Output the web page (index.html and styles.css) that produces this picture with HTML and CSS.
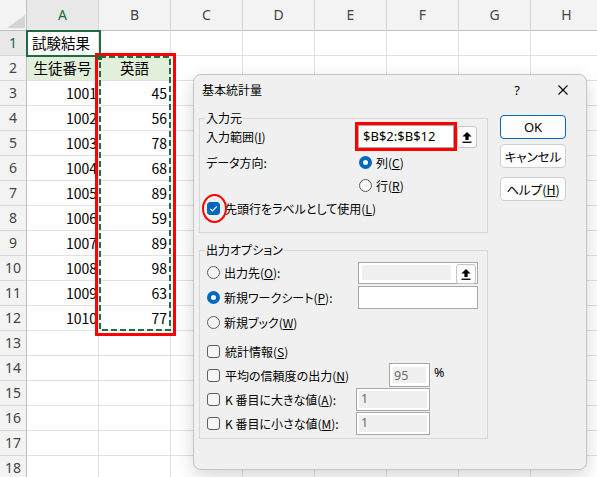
FILE: index.html
```html
<!DOCTYPE html>
<html lang="ja">
<head>
<meta charset="utf-8">
<link rel="stylesheet" href="styles.css">
</head>
<body>
<div class="sheet">
  <div class="h corner"><span class="tri"></span></div>
  <div class="h hs">A</div><div class="h">B</div><div class="h">C</div><div class="h">D</div><div class="h">E</div><div class="h">F</div><div class="h">G</div><div class="h">H</div>

  <div class="rh rhs">1</div><div class="c">試験結果</div><div class="c"></div><div class="c"></div><div class="c"></div><div class="c"></div><div class="c"></div><div class="c"></div><div class="c"></div>
  <div class="rh">2</div><div class="c g">生徒番号</div><div class="c g">英語</div><div class="c"></div><div class="c"></div><div class="c"></div><div class="c"></div><div class="c"></div><div class="c"></div>
  <div class="rh">3</div><div class="c n">1001</div><div class="c n b">45</div><div class="c"></div><div class="c"></div><div class="c"></div><div class="c"></div><div class="c"></div><div class="c"></div>
  <div class="rh">4</div><div class="c n">1002</div><div class="c n b">56</div><div class="c"></div><div class="c"></div><div class="c"></div><div class="c"></div><div class="c"></div><div class="c"></div>
  <div class="rh">5</div><div class="c n">1003</div><div class="c n b">78</div><div class="c"></div><div class="c"></div><div class="c"></div><div class="c"></div><div class="c"></div><div class="c"></div>
  <div class="rh">6</div><div class="c n">1004</div><div class="c n b">68</div><div class="c"></div><div class="c"></div><div class="c"></div><div class="c"></div><div class="c"></div><div class="c"></div>
  <div class="rh">7</div><div class="c n">1005</div><div class="c n b">89</div><div class="c"></div><div class="c"></div><div class="c"></div><div class="c"></div><div class="c"></div><div class="c"></div>
  <div class="rh">8</div><div class="c n">1006</div><div class="c n b">59</div><div class="c"></div><div class="c"></div><div class="c"></div><div class="c"></div><div class="c"></div><div class="c"></div>
  <div class="rh">9</div><div class="c n">1007</div><div class="c n b">89</div><div class="c"></div><div class="c"></div><div class="c"></div><div class="c"></div><div class="c"></div><div class="c"></div>
  <div class="rh">10</div><div class="c n">1008</div><div class="c n b">98</div><div class="c"></div><div class="c"></div><div class="c"></div><div class="c"></div><div class="c"></div><div class="c"></div>
  <div class="rh">11</div><div class="c n">1009</div><div class="c n b">63</div><div class="c"></div><div class="c"></div><div class="c"></div><div class="c"></div><div class="c"></div><div class="c"></div>
  <div class="rh">12</div><div class="c n">1010</div><div class="c n b">77</div><div class="c"></div><div class="c"></div><div class="c"></div><div class="c"></div><div class="c"></div><div class="c"></div>
  <div class="rh">13</div><div class="c"></div><div class="c"></div><div class="c"></div><div class="c"></div><div class="c"></div><div class="c"></div><div class="c"></div><div class="c"></div>
  <div class="rh">14</div><div class="c"></div><div class="c"></div><div class="c"></div><div class="c"></div><div class="c"></div><div class="c"></div><div class="c"></div><div class="c"></div>
  <div class="rh">15</div><div class="c"></div><div class="c"></div><div class="c"></div><div class="c"></div><div class="c"></div><div class="c"></div><div class="c"></div><div class="c"></div>
  <div class="rh">16</div><div class="c"></div><div class="c"></div><div class="c"></div><div class="c"></div><div class="c"></div><div class="c"></div><div class="c"></div><div class="c"></div>
  <div class="rh">17</div><div class="c"></div><div class="c"></div><div class="c"></div><div class="c"></div><div class="c"></div><div class="c"></div><div class="c"></div><div class="c"></div>
  <div class="rh">18</div><div class="c"></div><div class="c"></div><div class="c"></div><div class="c"></div><div class="c"></div><div class="c"></div><div class="c"></div><div class="c"></div>

  <div class="sel-a1"></div>
  <svg class="marquee" width="72" height="275" viewBox="0 0 72 275"><rect x="1" y="1" width="70" height="273" fill="none" stroke="#1f6e3e" stroke-width="2" stroke-dasharray="6 3"/></svg>
  <div class="redbox"></div>
  <div class="handle"></div>
</div>

<div class="dialog">
  <div class="titlebar">
    <span class="title">基本統計量</span>
    <span class="tb-btn q">?</span>
    <span class="tb-btn x"><svg width="10" height="10" viewBox="0 0 10 10"><path d="M0.5 0.5L9.5 9.5M9.5 0.5L0.5 9.5" stroke="#000" stroke-width="1.1"/></svg></span>
  </div>
  <div class="dbody">
    <div class="groups">
      <div class="group g1">
        <div class="gtitle">入力元</div>
        <div class="row ra">
          <span class="lbl w158">入力範囲(<u>I</u>)</span>
          <span class="field range">$B$2:$B$12</span>
          <span class="upbtn"><svg width="10" height="11" viewBox="0 0 10 11"><path d="M5 0L9.6 4.6H6.6V8H3.4V4.6H0.4Z" fill="#000"/><rect x="0.5" y="9.6" width="9" height="1.3" fill="#000"/></svg></span>
        </div>
        <div class="row rb">
          <span class="lbl w158">データ方向:</span>
          <span class="radio on"></span><span class="rtext">列(<u>C</u>)</span>
        </div>
        <div class="row rb">
          <span class="lbl w158"></span>
          <span class="radio"></span><span class="rtext">行(<u>R</u>)</span>
        </div>
        <div class="row rb">
          <span class="check on circled"><svg width="13" height="13" viewBox="0 0 13 13"><path d="M3.3 6.8L5.5 9L9.8 4.4" fill="none" stroke="#fff" stroke-width="1.2"/></svg></span><span class="ctext">先頭行をラベルとして使用(<u>L</u>)</span>
        </div>
      </div>

      <div class="group g2">
        <div class="gtitle">出力オプション</div>
        <div class="row re">
          <span class="lbl w158"><span class="radio"></span><span class="rtext">出力先(<u>O</u>):</span></span>
          <span class="field dis wide"><span class="fill"></span><span class="upbtn in"><svg width="10" height="11" viewBox="0 0 10 11"><path d="M5 0L9.6 4.6H6.6V8H3.4V4.6H0.4Z" fill="#000"/><rect x="0.5" y="9.6" width="9" height="1.3" fill="#000"/></svg></span></span>
        </div>
        <div class="row re">
          <span class="lbl w158"><span class="radio on"></span><span class="rtext">新規ワークシート(<u>P</u>):</span></span>
          <span class="field wide2"></span>
        </div>
        <div class="row re">
          <span class="lbl"><span class="radio"></span><span class="rtext">新規ブック(<u>W</u>)</span></span>
        </div>
        <div class="row rh2">
          <span class="check"></span><span class="ctext">統計情報(<u>S</u>)</span>
        </div>
        <div class="row ri">
          <span class="lbl w189"><span class="check"></span><span class="ctext">平均の信頼度の出力(<u>N</u>)</span></span>
          <span class="field dis pct"><span class="fill">95</span></span>
          <span class="pctsign">%</span>
        </div>
        <div class="row ri">
          <span class="lbl w156"><span class="check"></span><span class="ctext">K 番目に大きな値(<u>A</u>):</span></span>
          <span class="field dis kf"><span class="fill">1</span></span>
        </div>
        <div class="row ri">
          <span class="lbl w156"><span class="check"></span><span class="ctext">K 番目に小さな値(<u>M</u>):</span></span>
          <span class="field dis kf"><span class="fill">1</span></span>
        </div>
      </div>
    </div>
    <div class="buttons">
      <span class="btn ok">OK</span>
      <span class="btn cancel">キャンセル</span>
      <span class="btn help">ヘルプ(<u>H</u>)</span>
    </div>
  </div>
</div>
</body>
</html>
```
FILE: styles.css
```css
html, body {
  margin: 0;
  padding: 0;
}
body {
  width: 597px;
  height: 477px;
  overflow: hidden;
  position: relative;
  background: #fff;
  font-family: "Noto Sans CJK JP", "Noto Sans", sans-serif;
  color: #000;
}

/* ---------- sheet ---------- */
.sheet {
  display: grid;
  grid-template-columns: 27px repeat(8, 72px);
  grid-template-rows: 31px repeat(18, 25px);
  position: relative;
}
.sheet > div {
  box-sizing: border-box;
}
.c {
  border-right: 1px solid #e1e1e1;
  border-bottom: 1px solid #e1e1e1;
  font-size: 14.5px;
  line-height: 24px;
  white-space: nowrap;
  overflow: hidden;
  padding-left: 5px;
}
.c.n {
  text-align: right;
  padding-right: 1px;
  padding-left: 0;
  font-size: 14px;
}
.c.n.b {
  padding-right: 3px;
}
.c.g {
  background: #e2efda;
  text-align: center;
  padding-left: 0;
}
.h {
  background: #f3f3f3;
  border-right: 1px solid #d6d6d6;
  border-bottom: 1px solid #bfbfbf;
  text-align: center;
  line-height: 30px;
  font-size: 14px;
  color: #444;
  font-family: "Noto Sans", "Noto Sans CJK JP", sans-serif;
}
.h.hs {
  background: #e8e8e8;
  color: #1e6b3e;
}
.h.corner {
  display: flex;
  justify-content: flex-end;
  align-items: flex-end;
  padding: 0 1px 2px 0;
  border-right-color: #bfbfbf;
}
.tri {
  width: 0;
  height: 0;
  border-left: 18px solid transparent;
  border-bottom: 13px solid #d4d4d4;
}
.rh {
  background: #f3f3f3;
  border-right: 1px solid #bfbfbf;
  border-bottom: 1px solid #d6d6d6;
  text-align: center;
  line-height: 24px;
  font-size: 14px;
  color: #444;
  font-family: "Noto Sans", "Noto Sans CJK JP", sans-serif;
}
.rh.rhs {
  background: #e8e8e8;
  color: #1e6b3e;
}

/* overlays on the sheet */
.sel-a1 {
  position: absolute;
  grid-area: 2 / 2 / 3 / 3;
  top: -1px;
  left: -1px;
  right: -2px;
  bottom: -1px;
  border: 2px solid #1e6b3e;
}
.marquee {
  position: absolute;
  grid-area: 3 / 3 / 14 / 4;
  top: 0;
  left: 0;
}
.redbox {
  position: absolute;
  grid-area: 3 / 3 / 14 / 4;
  top: -3px;
  left: -4px;
  right: -5px;
  bottom: -5px;
  border: 3px solid #ff0000;
}
.handle {
  position: absolute;
  grid-area: 3 / 3 / 4 / 4;
  top: -1px;
  left: -2px;
  width: 5px;
  height: 5px;
  background: #1e6b3e;
}

/* ---------- dialog ---------- */
.dialog {
  position: absolute;
  left: 193px;
  top: 74px;
  width: 394px;
  height: 396px;
  box-sizing: border-box;
  background: #f0f0f0;
  border: 1px solid #c4c4c4;
  border-radius: 8px;
  box-shadow: 0 6px 18px rgba(0, 0, 0, 0.16);
  font-size: 12px;
  font-feature-settings: "palt";
  display: flex;
  flex-direction: column;
}
.titlebar {
  height: 29px;
  display: flex;
  align-items: center;
  padding-left: 8px;
}
.title {
  font-size: 12px;
  flex: 1;
}
.tb-btn {
  width: 46px;
  height: 29px;
  display: flex;
  align-items: center;
  justify-content: center;
}
.tb-btn.q {
  font-family: "Noto Sans", sans-serif;
  font-size: 13px;
}
.dbody {
  display: flex;
  padding: 0 20px 0 5px;
}
.groups {
  width: 289px;
  padding-top: 14px;
}
.group {
  border: 1px solid #d7d7d7;
  padding-left: 6px;
}
.g1 {
  padding-bottom: 12px;
}
.g2 {
  margin-top: 17px;
  padding-bottom: 3px;
}
.gtitle {
  height: 16px;
  line-height: 16px;
  margin-top: -9px;
  background: #f0f0f0;
  width: fit-content;
  padding: 0 1px;
  margin-left: -1px;
}
.g1 .gtitle {
  margin-bottom: -4px;
}
.g2 .gtitle {
  margin-bottom: 2px;
}
.row {
  display: flex;
  align-items: center;
  white-space: nowrap;
}
.ra { height: 29px; }
.rb { height: 23px; }
.re { height: 25px; }
.rh2 { height: 23px; margin-top: 5px; }
.ri { height: 24px; }
.lbl {
  display: flex;
  align-items: center;
  flex: none;
}
.w158 { width: 152px; }
.w189 { width: 183px; }
.w156 { width: 150px; }

.field {
  box-sizing: border-box;
  display: block;
  border: 1px solid #a8a8a8;
  background: #fff;
  flex: none;
}
.field.range {
  width: 96px;
  height: 23px;
  outline: 3px solid #ff0000;
  font-family: "Noto Sans", sans-serif;
  font-size: 13px;
  line-height: 21px;
  padding-left: 4px;
}
.upbtn {
  box-sizing: border-box;
  width: 20px;
  height: 22px;
  border: 1px solid #c6c6c6;
  border-radius: 3px;
  background: #fcfcfc;
  display: flex;
  align-items: center;
  justify-content: center;
  margin-left: 3px;
  flex: none;
}
.upbtn svg { margin-top: 1px; }
.field.dis {
  padding: 2px 3px;
  display: flex;
  align-items: stretch;
}
.fill {
  flex: 1;
  background: #f0f0f0;
  color: #6b6b6b;
  font-family: "Noto Sans", sans-serif;
  font-size: 12.5px;
  line-height: 16px;
  padding-left: 1px;
}
.field.wide {
  width: 120px;
  height: 22px;
  padding: 2px 1px 3px 3px;
}
.field.wide .fill {
  margin-right: 5px;
}
.upbtn.in {
  height: 20px;
  margin: -1px 0 -2px 0;
}
.field.wide2 {
  width: 120px;
  height: 23px;
}
.field.pct {
  width: 41px;
  height: 24px;
  padding: 3px 3px;
}
.field.pct .fill {
  line-height: 18px;
  padding-left: 1px;
}
.pctsign {
  margin-left: 4px;
  margin-top: -6px;
  font-family: "Noto Sans", sans-serif;
  font-size: 12.5px;
}
.field.kf {
  width: 74px;
  height: 23px;
  padding: 2px 2px;
}
.field.kf .fill {
  line-height: 15px;
  padding-left: 2px;
}

.radio {
  box-sizing: border-box;
  width: 13px;
  height: 13px;
  border-radius: 50%;
  border: 1px solid #5e5e5e;
  background: #f6f6f6;
  flex: none;
  margin-left: 1px;
}
.radio.on {
  border: 4px solid #0067c0;
  background: #fff;
}
.rtext { margin-left: 4px; }
.w158 .radio, .lbl .radio { margin-left: 1px; }
.check {
  box-sizing: border-box;
  width: 13px;
  height: 13px;
  border-radius: 3px;
  border: 1px solid #5e5e5e;
  background: #f6f6f6;
  flex: none;
  margin-left: 1px;
  position: relative;
  display: block;
}
.check.on {
  background: #0067c0;
  border-color: #0067c0;
}
.check.on svg {
  position: absolute;
  left: -1px;
  top: -1px;
}
.check.circled::after {
  content: "";
  position: absolute;
  left: -6px;
  top: -9px;
  width: 25px;
  height: 29px;
  box-sizing: border-box;
  border: 2px solid #ff0000;
  border-radius: 50%;
}
.ctext { margin-left: 5px; }

.buttons {
  display: flex;
  flex-direction: column;
  margin-left: 12px;
  padding-top: 11px;
}
.btn {
  box-sizing: border-box;
  width: 66px;
  height: 24px;
  border: 1px solid #cfcfcf;
  border-radius: 4px;
  background: #fdfdfd;
  display: flex;
  align-items: center;
  justify-content: center;
  font-size: 12.5px;
}
.btn.ok {
  border-color: #0067c0;
  font-family: "Noto Sans", sans-serif;
  font-size: 13px;
}
.btn.cancel { margin-top: 5px; }
.btn.help { margin-top: 9px; }
```
